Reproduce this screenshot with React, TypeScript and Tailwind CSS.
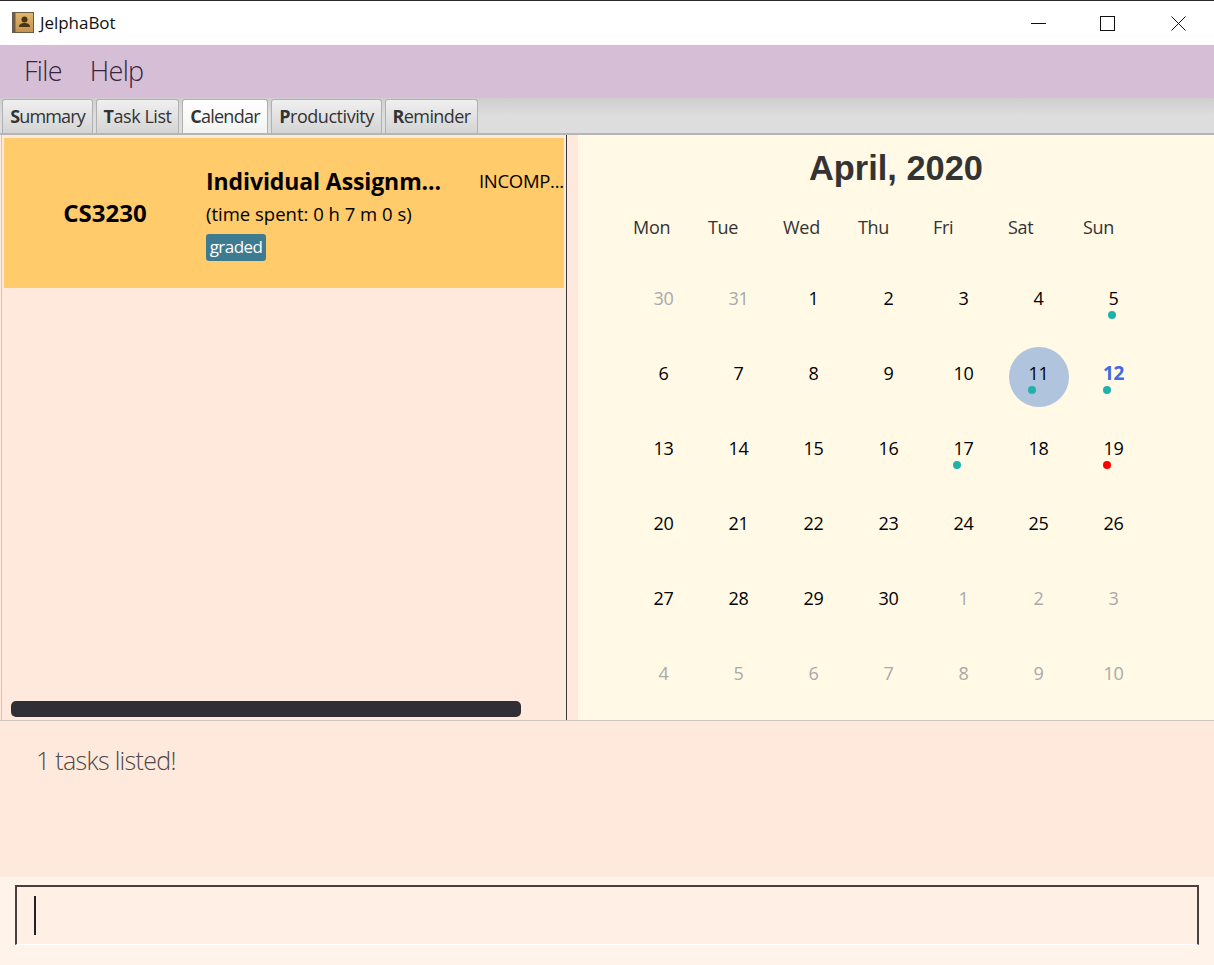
import React from "react";

const sans = "font-['Open_Sans','Noto_Sans',sans-serif]";

const tabs = [
  ["S", "ummary", "w-[91px] tracking-[-0.85px]"],
  ["T", "ask List", "w-[83px] tracking-[-0.45px]"],
  ["C", "alendar", "w-[86px] tracking-[-0.75px]"],
  ["P", "roductivity", "w-[111px] tracking-[-0.45px]"],
  ["R", "eminder", "w-[93px] tracking-[-0.6px]"],
];

type Day = { n: number; muted?: boolean; dot?: string; dotX?: number; today?: boolean; selected?: boolean };

const days: Day[] = [
  { n: 30, muted: true }, { n: 31, muted: true }, { n: 1 }, { n: 2 }, { n: 3 }, { n: 4 }, { n: 5, dot: "bg-[#20b2aa]", dotX: -1 },
  { n: 6 }, { n: 7 }, { n: 8 }, { n: 9 }, { n: 10 }, { n: 11, dot: "bg-[#20b2aa]", dotX: -6, selected: true }, { n: 12, dot: "bg-[#20b2aa]", dotX: -6, today: true },
  { n: 13 }, { n: 14 }, { n: 15 }, { n: 16 }, { n: 17, dot: "bg-[#20b2aa]", dotX: -6 }, { n: 18 }, { n: 19, dot: "bg-[#ff0000]", dotX: -6 },
  { n: 20 }, { n: 21 }, { n: 22 }, { n: 23 }, { n: 24 }, { n: 25 }, { n: 26 },
  { n: 27 }, { n: 28 }, { n: 29 }, { n: 30 }, { n: 1, muted: true }, { n: 2, muted: true }, { n: 3, muted: true },
  { n: 4, muted: true }, { n: 5, muted: true }, { n: 6, muted: true }, { n: 7, muted: true }, { n: 8, muted: true }, { n: 9, muted: true }, { n: 10, muted: true },
];

function AppIcon() {
  return (
    <svg width="22" height="22" viewBox="0 0 22 22" className="shrink-0">
      <defs>
        <linearGradient id="bk" x1="0" y1="0" x2="0" y2="1">
          <stop offset="0" stopColor="#e2b76c" />
          <stop offset="1" stopColor="#c29350" />
        </linearGradient>
      </defs>
      <rect x="0.5" y="0.5" width="21" height="20" fill="url(#bk)" stroke="#6b5a45" />
      <rect x="0.5" y="0.5" width="3" height="20" fill="#6f5d4c" />
      <circle cx="12.5" cy="7.5" r="3" fill="#4a3418" />
      <path d="M7 15c0-3 2.5-4 5.5-4s5.5 1 5.5 4z" fill="#4a3418" />
    </svg>
  );
}

function WindowButtons() {
  return (
    <div className="flex items-center ml-auto pr-[28px]">
      <svg width="15" height="15" viewBox="0 0 15 15"><path d="M0 7.5h15" stroke="#111" strokeWidth="1" /></svg>
      <svg width="15" height="15" viewBox="0 0 15 15" className="ml-[54px]"><rect x="0.5" y="0.5" width="14" height="14" fill="none" stroke="#111" strokeWidth="1" /></svg>
      <svg width="15" height="15" viewBox="0 0 15 15" className="ml-[56px]"><path d="M0.5 0.5l14 14M14.5 0.5l-14 14" stroke="#111" strokeWidth="1" /></svg>
    </div>
  );
}

export default function App() {
  return (
    <div className={`w-[1214px] h-[965px] flex flex-col bg-[#fff3ea] overflow-hidden ${sans}`}>
      <div className="h-[45px] shrink-0 bg-white border-t border-t-[#2b2b2b] flex items-center pl-[12px]">
        <AppIcon />
        <span className="ml-[6px] text-[17px] text-[#111] tracking-[-0.05px]">JelphaBot</span>
        <WindowButtons />
      </div>

      <div className="h-[53px] shrink-0 bg-[#d6bfd6] flex items-center pl-[24px] gap-[28px] text-[#35253d] text-[27px] font-light tracking-[-0.7px]">
        <span>File</span>
        <span>Help</span>
      </div>

      <div className="h-[37px] shrink-0 bg-gradient-to-b from-[#cfcfcf] via-[#dddddd] to-[#dddddd] border-b-2 border-b-[#b5b5b5] flex items-end pl-[2px] gap-[3px]">
        {tabs.map(([b, r, w], i) => (
          <div
            key={b}
            className={`${w} h-[34px] rounded-t-[3px] border border-b-0 border-[#b0b0b0] flex items-center justify-center text-[18px] text-[#333] ${
              i === 2 ? "bg-gradient-to-b from-[#ffffff] to-[#f2f4f2]" : "bg-gradient-to-b from-[#f0f0f0] to-[#d4d4d4]"
            }`}
          >
            <span>
              <b className="font-bold">{b}</b>
              {r}
            </span>
          </div>
        ))}
      </div>

      <div className="h-[586px] shrink-0 flex bg-[#ffe9dd] border-b border-b-[#cdc5c0]">
        <div className="w-[566px] shrink-0 flex flex-col border-l border-l-[#cfc8c3] border-r border-r-[#3a3a3a] ml-[1px] pt-[3px] pl-[2px]">
          <div className="w-[560px] h-[150px] shrink-0 bg-[#ffcb6b] flex overflow-hidden text-black">
            <div className="w-[202px] shrink-0 flex items-center justify-center text-[24px] font-bold tracking-[0px]">CS3230</div>
            <div className="w-[273px] shrink-0 flex flex-col pt-[25px]">
              <div className="text-[23px] leading-[36px] font-bold tracking-[-0.1px] whitespace-nowrap">Individual Assignm...</div>
              <div className="text-[18.5px] leading-[30px] tracking-[0px] whitespace-nowrap">(time spent: 0 h 7 m 0 s)</div>
              <div className="mt-[5px] w-[60px] h-[27px] bg-[#3e7b91] rounded-[3px] text-white text-[17px] leading-[26px] text-center tracking-[-0.55px]">graded</div>
            </div>
            <div className="pt-[29px] text-[18.5px] leading-[28px] tracking-[-0.3px] whitespace-nowrap">INCOMP...</div>
          </div>
          <div className="mt-auto mb-[3px] ml-[7px] w-[510px] h-[16px] rounded-[5px] bg-[#2f2f35]" />
        </div>

        <div className="w-[11px] shrink-0" />

        <div className="flex-1 bg-[#fff9e6] flex flex-col">
          <div className="h-[66px] shrink-0 flex items-center justify-center pt-[2px] font-['Liberation_Sans',sans-serif] text-[34.4px] font-bold text-[#333]">April, 2020</div>
          <div className="ml-[55px] grid grid-cols-[repeat(7,75px)] h-[60px] pb-[8px] items-center text-[18px] text-[#333] tracking-[-0.3px]">
            {["Mon", "Tue", "Wed", "Thu", "Fri", "Sat", "Sun"].map((d) => (
              <span key={d}>{d}</span>
            ))}
          </div>
          <div className="ml-[48px] grid grid-cols-[repeat(7,75px)] grid-rows-[repeat(6,75px)]">
            {days.map((d, i) => (
              <div key={i} className="relative flex items-center justify-center">
                {d.selected && <div className="absolute left-[8px] top-[11px] w-[60px] h-[60px] rounded-full bg-[#b0c4de]" />}
                <span
                  className={`relative text-[18px] tracking-[-0.3px] ${
                    d.today ? "text-[#4169e1] font-bold text-[19px]" : d.muted ? "text-[#a9a9a9]" : "text-black"
                  }`}
                >
                  {d.n}
                </span>
                {d.dot && (
                  <span
                    className={`absolute top-[50px] w-[8px] h-[8px] rounded-full ${d.dot}`}
                    style={{ left: 32.5 + (d.dotX ?? 0) }}
                  />
                )}
              </div>
            ))}
          </div>
        </div>
      </div>

      <div className="h-[156px] shrink-0 bg-[#ffe9dd] pl-[36px] pt-[21px] text-[25px] leading-[36px] font-light text-[#4d4848] tracking-[-0.7px]">
        1 tasks listed!
      </div>

      <div className="flex-1 bg-[#fff3ea] pl-[15px] pr-[15px] pt-[8px]">
        <div className="h-[60px] bg-[#ffefe5] border-t-2 border-x-2 border-t-[#4a4040] border-x-[#4a4040] border-b border-b-white pt-[9px] pl-[17px]">
          <div className="w-[2px] h-[39px] bg-[#222]" />
        </div>
      </div>
    </div>
  );
}
